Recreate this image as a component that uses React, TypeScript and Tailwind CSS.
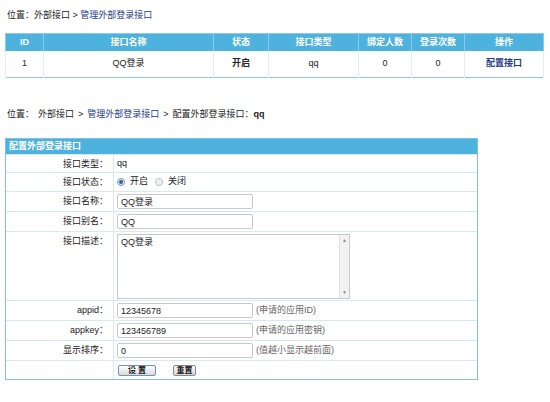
import React from 'react';

const font = { fontFamily: '"Liberation Sans", "Noto Sans CJK SC", sans-serif' };

const cols = [
  { t: 'ID', w: 'w-[38px]' },
  { t: '接口名称', w: 'w-[170px]' },
  { t: '状态', w: 'w-[55px]' },
  { t: '接口类型', w: 'w-[90px]' },
  { t: '绑定人数', w: 'w-[53px]' },
  { t: '登录次数', w: 'w-[53px]' },
  { t: '操作', w: 'w-[79px]' },
];

const Row = ({ label, h, children }: { label: string; h: string; children: React.ReactNode }) => (
  <div className={`flex border-t border-[#d6eaf4] ${h}`}>
    <div className="w-[108px] shrink-0 border-r border-[#d6eaf4] pr-[5px] text-right pt-[3px]">{label}</div>
    <div className="flex-1 pl-[3px] flex items-center">{children}</div>
  </div>
);

const Input = ({ value }: { value: string }) => (
  <input
    readOnly
    value={value}
    className="w-[136px] h-[15px] border border-[#c9c9c9] rounded-[2px] px-[3px] text-[9px] text-[#222] outline-none"
    style={font}
  />
);

const Hint = ({ t }: { t: string }) => <span className="ml-[3px] text-[#666]">{t}</span>;

export default function App() {
  return (
    <div className="w-[550px] h-[402px] bg-white text-[9px] text-[#222]" style={font}>
      {/* breadcrumb */}
      <div className="pt-[9px] pl-[7px] h-[33px]">
        位置：外部接口 &gt; <span className="text-[#1d3a8c]">管理外部登录接口</span>
      </div>

      <table className="ml-[5px] w-[539px] border border-[#8fcbe7] border-collapse">
        <thead>
          <tr className="bg-[#4eb2de] h-[17px]">
            {cols.map((c) => (
              <th key={c.t} className={`${c.w} border-x border-[#8ccbe8] text-white font-bold text-center`}>
                {c.t}
              </th>
            ))}
          </tr>
        </thead>
        <tbody>
          <tr className="h-[27px] text-center">
            <td className="border-x border-[#e1eef4]">1</td>
            <td className="border-x border-[#e1eef4]">QQ登录</td>
            <td className="border-x border-[#e1eef4] font-bold">开启</td>
            <td className="border-x border-[#e1eef4]">qq</td>
            <td className="border-x border-[#e1eef4]">0</td>
            <td className="border-x border-[#e1eef4]">0</td>
            <td className="border-x border-[#e1eef4] text-[#1d3a8c] font-bold">配置接口</td>
          </tr>
        </tbody>
      </table>

      {/* second breadcrumb */}
      <div className="pt-[30px] pl-[7px] h-[60px] flex gap-[4px]">
        <span>位置：</span>
        <span>外部接口</span>
        <span>&gt;</span>
        <span className="text-[#1d3a8c]">管理外部登录接口</span>
        <span>&gt;</span>
        <span>
          配置外部登录接口：<b>qq</b>
        </span>
      </div>

      {/* config form */}
      <div className="ml-[5px] w-[473px] border border-[#7dc2e3]">
        <div className="h-[15px] bg-[#4eb2de] text-white font-bold pl-[3px] leading-[15px]">配置外部登录接口</div>
        <Row label="接口类型：" h="h-[18px]">
          <span className="pt-[1px]">qq</span>
        </Row>
        <Row label="接口状态：" h="h-[19px]">
          <label className="flex items-center gap-[3px]">
            <span className="w-[8px] h-[8px] rounded-full border border-[#7d95b5] bg-[#e8eef6] flex items-center justify-center">
              <span className="w-[4px] h-[4px] rounded-full bg-[#2f5d9c]" />
            </span>
            <span className="ml-[2px]">开启</span>
          </label>
          <label className="flex items-center gap-[3px] ml-[7px]">
            <span className="w-[8px] h-[8px] rounded-full border border-[#b7c2cf] bg-[#eef1f4]" />
            <span className="ml-[2px]">关闭</span>
          </label>
        </Row>
        <Row label="接口名称：" h="h-[20px]">
          <Input value="QQ登录" />
        </Row>
        <Row label="接口别名：" h="h-[20px]">
          <Input value="QQ" />
        </Row>
        <Row label="接口描述：" h="h-[69px]">
          <div className="self-start mt-[2px] w-[233px] h-[65px] border border-[#c9c9c9] flex">
            <textarea
              readOnly
              value="QQ登录"
              className="flex-1 resize-none outline-none px-[3px] pt-[1px] text-[9px] text-[#222]"
              style={font}
            />
            <div className="w-[10px] bg-[#f2f2f2] border-l border-[#e2e2e2] flex flex-col justify-between items-center text-[5px] text-[#888] py-[2px]">
              <span>▲</span>
              <span>▼</span>
            </div>
          </div>
        </Row>
        <Row label="appid：" h="h-[20px]">
          <Input value="12345678" />
          <Hint t="(申请的应用ID)" />
        </Row>
        <Row label="appkey：" h="h-[20px]">
          <Input value="123456789" />
          <Hint t="(申请的应用密钥)" />
        </Row>
        <Row label="显示排序：" h="h-[20px]">
          <Input value="0" />
          <Hint t="(值越小显示越前面)" />
        </Row>
        <div className="flex border-t border-[#d6eaf4] h-[19px]">
          <div className="w-[108px] shrink-0 border-r border-[#d6eaf4]" />
          <div className="flex-1 flex items-center pl-[4px] gap-[17px]">
            <button
              className="w-[38px] h-[11px] leading-[9px] border border-[#6f8fbf] rounded-[2px] bg-gradient-to-b from-[#ffffff] to-[#d9d9d9] font-bold text-[8px] text-[#222]"
              style={font}
            >
              设 置
            </button>
            <button
              className="w-[23px] h-[11px] leading-[9px] border border-[#8a8a8a] rounded-[2px] bg-gradient-to-b from-[#ffffff] to-[#d5d5d5] font-bold text-[8px] text-[#222]"
              style={font}
            >
              重置
            </button>
          </div>
        </div>
      </div>
    </div>
  );
}
